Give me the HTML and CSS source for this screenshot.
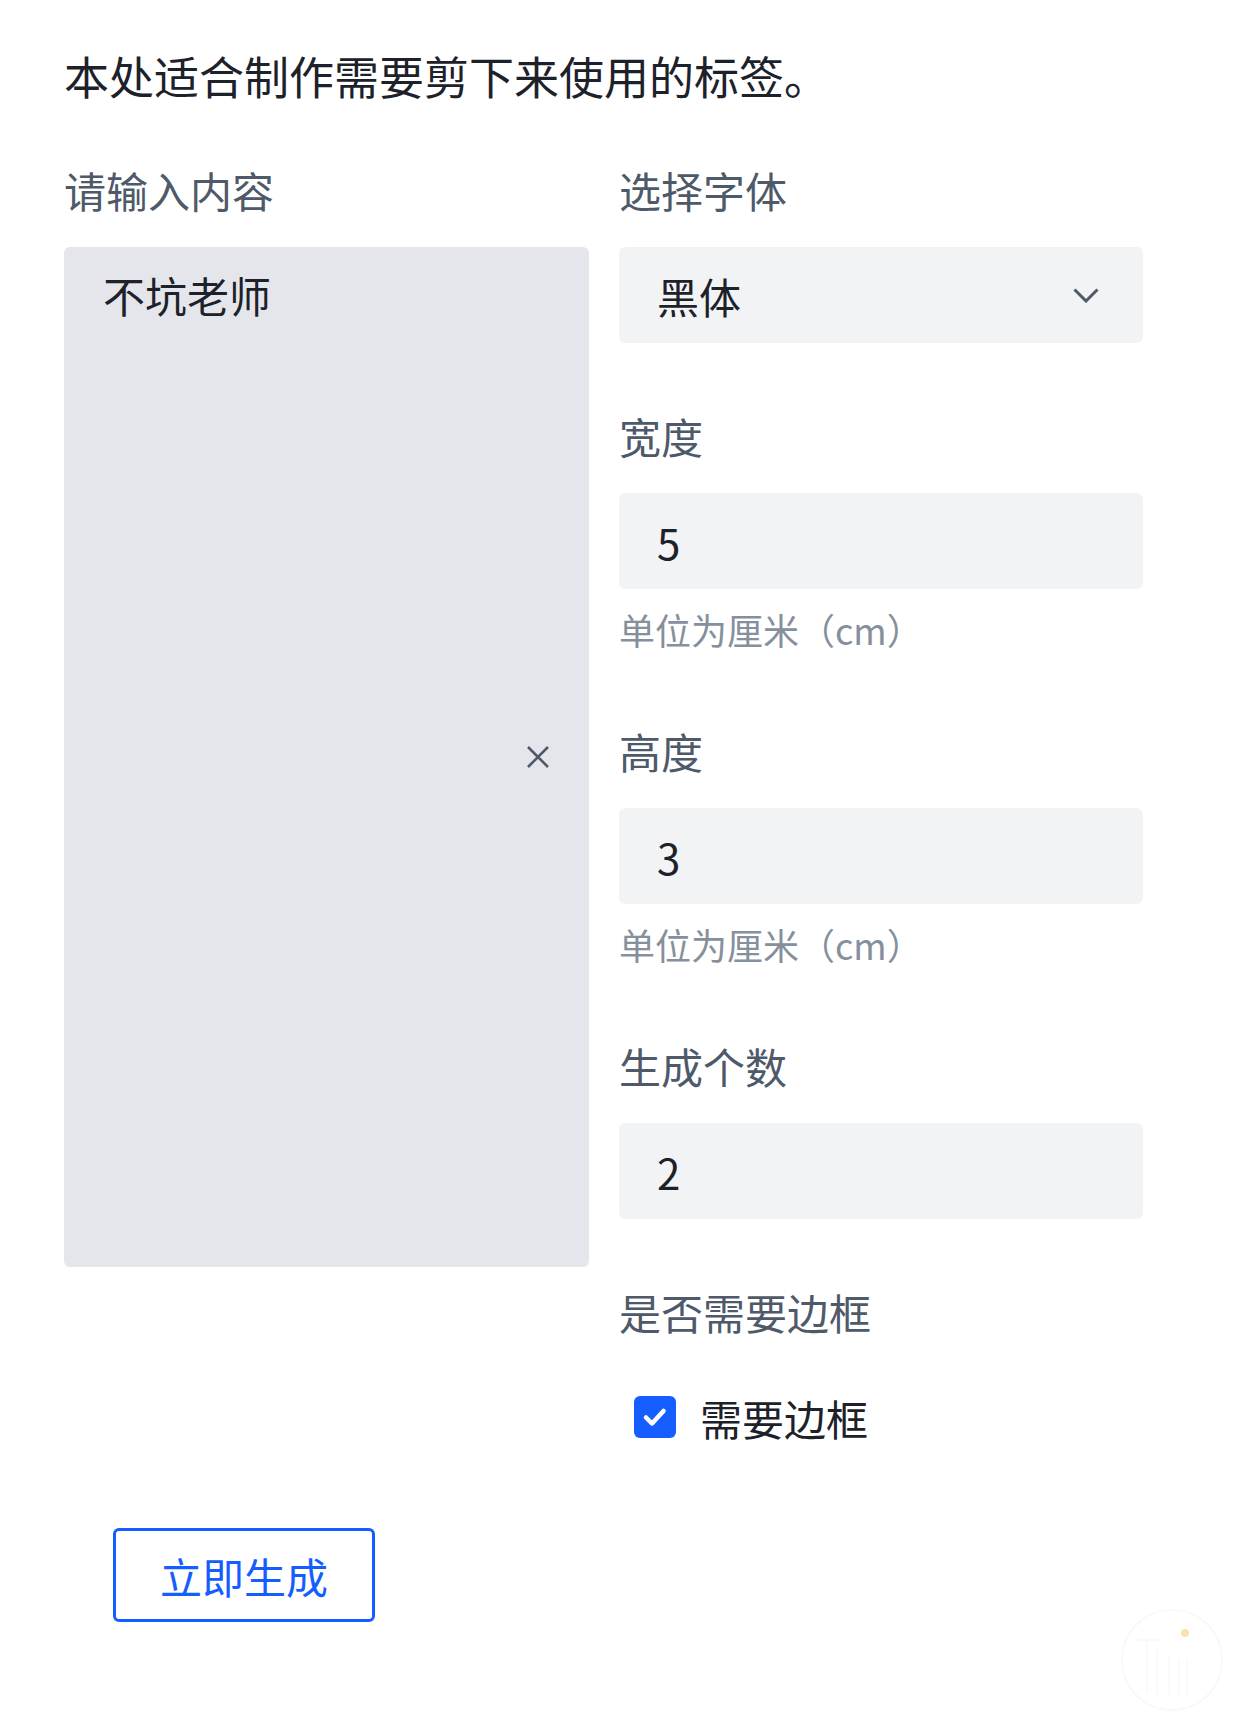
FILE: index.html
```html
<!DOCTYPE html>
<html lang="zh-CN">
<head>
<meta charset="utf-8">
<title>标签制作</title>
<link rel="stylesheet" href="styles.css">
</head>
<body>
<div class="page">
  <p class="intro">本处适合制作需要剪下来使用的标签。</p>
  <form class="form">
    <div class="cols">
      <div class="col">
        <div class="label">请输入内容</div>
        <div class="textarea-wrap">
          <div class="textarea">不坑老师</div>
          <span class="clear">
            <svg viewBox="0 0 24 24" width="24" height="24"><path d="M2 2L22 22M22 2L2 22" stroke="#4e5969" stroke-width="2.6" fill="none"/></svg>
          </span>
        </div>
      </div>
      <div class="col">
        <div class="item">
          <div class="label">选择字体</div>
          <div class="control select">
            <span>黑体</span>
            <svg class="chevron" viewBox="0 0 26 15" width="26" height="15"><path d="M1.5 1.5L13 13L24.5 1.5" stroke="#4e5969" stroke-width="3" fill="none"/></svg>
          </div>
        </div>
        <div class="item">
          <div class="label">宽度</div>
          <div class="control input">5</div>
          <div class="help">单位为厘米（cm）</div>
        </div>
        <div class="item">
          <div class="label">高度</div>
          <div class="control input">3</div>
          <div class="help">单位为厘米（cm）</div>
        </div>
        <div class="item">
          <div class="label">生成个数</div>
          <div class="control input">2</div>
        </div>
        <div class="item">
          <div class="label">是否需要边框</div>
          <div class="check-row">
            <span class="checkbox">
              <svg viewBox="0 0 42 42" width="42" height="42"><path d="M12 21.5L18 27.5L29.5 15" stroke="#fff" stroke-width="4.5" stroke-linecap="round" stroke-linejoin="round" fill="none"/></svg>
            </span>
            <span class="check-label">需要边框</span>
          </div>
        </div>
      </div>
    </div>
    <button type="button" class="submit">立即生成</button>
  </form>
  <svg class="watermark" viewBox="0 0 110 110" width="110" height="110">
    <circle cx="55" cy="55" r="50" stroke="#f8f8f8" stroke-width="1.5" fill="none"/>
    <path d="M18 35H45M30 35V88M40 45V90M52 50V90M62 55V90M70 55V92" stroke="#f9f9f9" stroke-width="1.5" fill="none"/>
    <circle cx="68" cy="28" r="4" fill="#f9e3ad"/>
  </svg>
</div>
</body>
</html>
```

FILE: styles.css
```css
html, body {
  margin: 0;
  padding: 0;
  background: #ffffff;
}

body {
  font-family: "Noto Sans CJK SC", "Noto Sans", sans-serif;
  color: #1d2129;
}

.page {
  position: relative;
  width: 1234px;
  min-height: 1721px;
  padding: 40px 0 0 64px;
  box-sizing: border-box;
}

.intro {
  margin: 0;
  font-size: 45px;
  line-height: 72px;
  color: #1d2129;
}

.form {
  margin-top: 45px;
  width: 1079px;
}

.cols {
  display: grid;
  grid-template-columns: 525px 524px;
  column-gap: 30px;
  align-items: start;
}

.label {
  font-size: 42px;
  line-height: 66px;
  color: #4e5969;
  padding-bottom: 24px;
}

.textarea-wrap {
  position: relative;
  height: 1020px;
  background: #e5e6eb;
  border-radius: 6px;
}

.textarea {
  padding: 15px 39px;
  font-size: 42px;
  line-height: 66px;
  color: #1d2129;
}

.clear {
  position: absolute;
  right: 39px;
  top: 50%;
  transform: translateY(-50%);
  width: 24px;
  height: 24px;
  display: flex;
}

.item {
  margin-bottom: 60px;
}

.control {
  height: 96px;
  box-sizing: border-box;
  background: #f2f3f5;
  border-radius: 6px;
  display: flex;
  align-items: center;
  padding: 0 44px 0 38px;
  font-size: 42px;
  color: #1d2129;
}

.select {
  justify-content: space-between;
}

.chevron {
  display: block;
}

.help {
  margin-top: 12px;
  font-size: 36px;
  line-height: 57px;
  color: #86909c;
}

.check-row {
  height: 96px;
  display: flex;
  align-items: center;
  padding-left: 15px;
}

.checkbox {
  width: 42px;
  height: 42px;
  border-radius: 6px;
  background: #165dff;
  display: flex;
}

.check-label {
  margin-left: 24px;
  font-size: 42px;
  color: #1d2129;
}

.submit {
  display: flex;
  align-items: center;
  justify-content: center;
  margin: 3px 0 0 49px;
  width: 262px;
  height: 94px;
  border: 3px solid #165dff;
  border-radius: 6px;
  background: #ffffff;
  color: #165dff;
  font-family: "Noto Sans CJK SC", "Noto Sans", sans-serif;
  font-size: 42px;
  padding: 0;
}

.watermark {
  position: absolute;
  left: 1117px;
  top: 1605px;
}
```
